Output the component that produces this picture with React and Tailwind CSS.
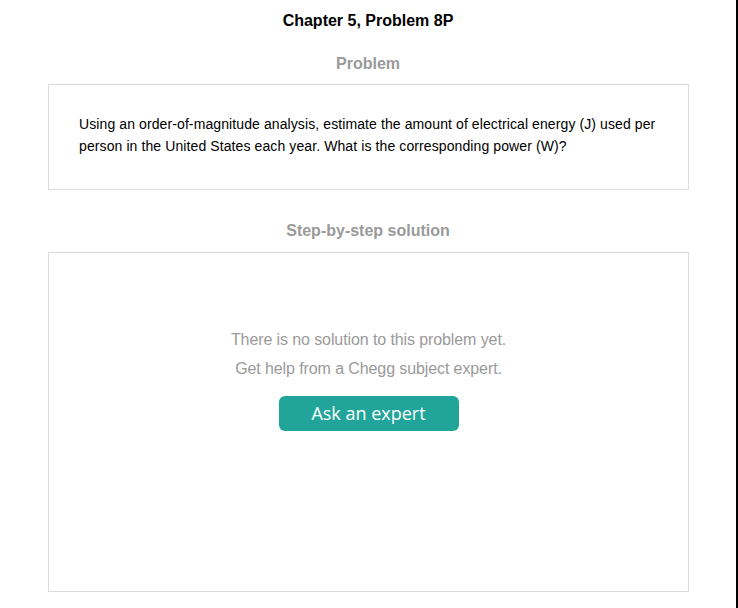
import React from "react";

function App() {
  return (
    <div className="w-[738px] h-[608px] bg-white overflow-hidden font-['Liberation_Sans',Arial,sans-serif]">
      <div className="w-[738px] h-[608px] border-r-2 border-black">
        <h1 className="pt-[11px] text-center text-base font-bold leading-5 text-black">
          Chapter 5, Problem 8P
        </h1>
        <h2 className="mt-[23px] text-center text-base font-bold leading-5 text-[#9a9a9a]">
          Problem
        </h2>
        <div className="ml-12 mr-[47px] mt-[10px] h-[106px] border border-[#dcdcdc] pl-[30px] pr-[28px] pt-[28px] text-sm leading-[22px] tracking-[0.1px] text-black">
          Using an order-of-magnitude analysis, estimate the amount of electrical energy (J) used per
          person in the United States each year. What is the corresponding power (W)?
        </div>
        <h2 className="mt-[31px] text-center text-base font-bold leading-5 text-[#9a9a9a]">
          Step-by-step solution
        </h2>
        <div className="ml-12 mr-[47px] mt-[11px] h-[340px] border border-[#dcdcdc] flex flex-col items-center pt-[72px]">
          <p className="text-base leading-[29px] tracking-[-0.1px] text-[#9a9a9a]">
            There is no solution to this problem yet.
          </p>
          <p className="text-base leading-[29px] tracking-[-0.1px] text-[#9a9a9a]">
            Get help from a Chegg subject expert.
          </p>
          <button className="mt-[13px] w-[180px] h-[35px] rounded-[6px] bg-[#21a59b] text-white text-[18px] leading-[35px] font-['Open_Sans','Noto_Sans',sans-serif]">
            Ask an expert
          </button>
        </div>
      </div>
    </div>
  );
}

export default App;
